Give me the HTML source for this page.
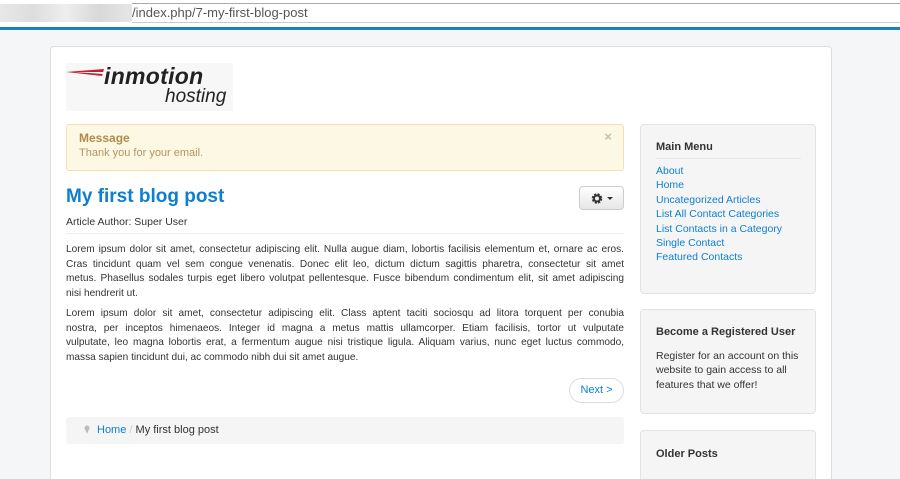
<!DOCTYPE html>
<html><head><meta charset="utf-8"><style>
*{margin:0;padding:0;box-sizing:border-box}
html,body{width:900px;height:479px;overflow:hidden}
body{background:#f4f6f7;font-family:"Liberation Sans",Arial,sans-serif;font-size:11px;color:#333;position:relative}
.url{position:absolute;left:0;top:0;width:900px;height:28px;background:#fff}
.blur{position:absolute;left:0;top:4px;width:132px;height:18px;background:linear-gradient(90deg,#e8e8e8,#ddd,#eee,#d8d8d8,#e6e6e6)}
.urlbox{position:absolute;left:132px;top:3px;width:770px;height:20px;border-top:1px solid #aaa;border-bottom:1px solid #ccc}
.urltxt{position:absolute;left:132px;top:5px;font-size:13px;color:#555}
.bar{position:absolute;left:0;top:27px;width:900px;height:3px;background:#1f7fc6}
.wrap{position:absolute;left:50px;top:46px;width:782px;height:440px;background:#fff;border:1px solid #ddd;border-radius:4px}
a{color:#0d7fd0;text-decoration:none}
.abs{position:absolute}
.msg{left:66px;top:124px;width:558px;height:47px;background:#fcf8e3;border:1px solid #f0e2b6;border-radius:3px}
.msg b{position:absolute;left:12px;top:6px;font-size:12px;color:#b08a4a}
.msg span{position:absolute;left:12px;top:22px;color:#b69560}
.msg i{position:absolute;right:11px;top:4px;font-style:normal;color:#c8bda0;font-size:13px;font-weight:bold}
h1{position:absolute;left:66px;top:186px;font-size:19px;color:#0d7fd0;font-weight:bold}
.gear{left:579px;top:186px;width:45px;height:24px;border:1px solid #ccc;border-radius:4px;background:linear-gradient(#fff,#e6e6e6)}
.p{position:absolute;left:66px;width:558px;line-height:14.5px;font-size:10.1px}
.p div{text-align:justify;text-align-last:justify;white-space:nowrap}
.p div.l{text-align-last:left}
.side{left:640px;width:176px;background:#f5f5f5;border:1px solid #e3e3e3;border-radius:4px}
.side h3{position:absolute;left:15px;font-size:11px;color:#333}
.next{left:569px;top:378px;width:55px;height:25px;border:1px solid #ddd;border-radius:13px;text-align:center;line-height:23px}
.bc{left:66px;top:417px;width:558px;height:27px;background:#f5f5f5;border-radius:3px}
</style></head><body>
<div class="url"><div class="blur"></div><div class="urlbox"></div><div class="urltxt">/index.php/7-my-first-blog-post</div></div>
<div class="bar"></div>
<div class="wrap"></div>
<div class="abs" style="left:66px;top:63px;width:167px;height:48px;background:#f7f7f7"></div>
<svg class="abs" style="left:66px;top:66px" width="40" height="14"><polygon points="0,6 38,3 36,10" fill="#c8202a"/><polygon points="8,6 38,6 38,8" fill="#fff"/></svg>
<div class="abs" style="left:104px;top:63px;font-size:23px;font-weight:900;font-style:italic;color:#222;letter-spacing:0.3px">inmotion</div>
<div class="abs" style="left:165px;top:86px;font-size:19px;font-style:italic;color:#222">hosting</div>
<div class="abs msg"><b>Message</b><span>Thank you for your email.</span><i>×</i></div>
<h1>My first blog post</h1>
<div class="abs gear"><svg style="position:absolute;left:11px;top:5px" width="24" height="13"><circle cx="6" cy="6.5" r="4" fill="none" stroke="#333" stroke-width="2.5" stroke-dasharray="2 1.2"/><circle cx="6" cy="6.5" r="3" fill="none" stroke="#333" stroke-width="2"/><polygon points="16,5 22,5 19,8" fill="#333"/></svg></div>
<div class="abs" style="left:66px;top:216px;font-size:10.5px">Article Author: Super User</div>
<div class="abs" style="left:66px;top:233px;width:558px;border-top:1px solid #eee"></div>
<div class="p" style="top:243px">
<div>Lorem ipsum dolor sit amet, consectetur adipiscing elit. Nulla augue diam, lobortis facilisis elementum et, ornare ac eros.</div>
<div>Cras tincidunt quam vel sem congue venenatis. Donec elit leo, dictum dictum sagittis pharetra, consectetur sit amet</div>
<div>metus. Phasellus sodales turpis eget libero volutpat pellentesque. Fusce bibendum condimentum elit, sit amet adipiscing</div>
<div class="l">nisi hendrerit ut.</div></div>
<div class="p" style="top:307px">
<div>Lorem ipsum dolor sit amet, consectetur adipiscing elit. Class aptent taciti sociosqu ad litora torquent per conubia</div>
<div>nostra, per inceptos himenaeos. Integer id magna a metus mattis ullamcorper. Etiam facilisis, tortor ut vulputate</div>
<div>vulputate, leo magna lobortis erat, a fermentum augue nisi tristique ligula. Aliquam varius, nunc eget luctus commodo,</div>
<div class="l">massa sapien tincidunt dui, ac commodo nibh dui sit amet augue.</div></div>
<div class="abs next"><a>Next &gt;</a></div>
<div class="abs bc"><svg style="position:absolute;left:18px;top:8px" width="6" height="10"><circle cx="3" cy="3" r="2.5" fill="#bbb"/><polygon points="1,4 5,4 3,9" fill="#bbb"/></svg><span style="position:absolute;left:31px;top:7px"><a>Home</a> <span style="color:#ccc">/</span> My first blog post</span></div>
<div class="abs side" style="top:124px;height:170px"><h3 style="top:16px">Main Menu</h3><div style="position:absolute;left:15px;top:33px;width:145px;border-top:1px solid #e8e8e8"></div>
<div style="position:absolute;left:15px;top:39px;line-height:14.4px;font-size:10.5px"><a>About</a><br><a>Home</a><br><a>Uncategorized Articles</a><br><a>List All Contact Categories</a><br><a>List Contacts in a Category</a><br><a>Single Contact</a><br><a>Featured Contacts</a></div></div>
<div class="abs side" style="top:309px;height:105px"><h3 style="top:16px">Become a Registered User</h3><div style="position:absolute;left:15px;top:39px;width:150px;line-height:14.4px;font-size:10.5px">Register for an account on this website to gain access to all features that we offer!</div></div>
<div class="abs side" style="top:430px;height:60px"><h3 style="top:17px">Older Posts</h3></div>
</body></html>
